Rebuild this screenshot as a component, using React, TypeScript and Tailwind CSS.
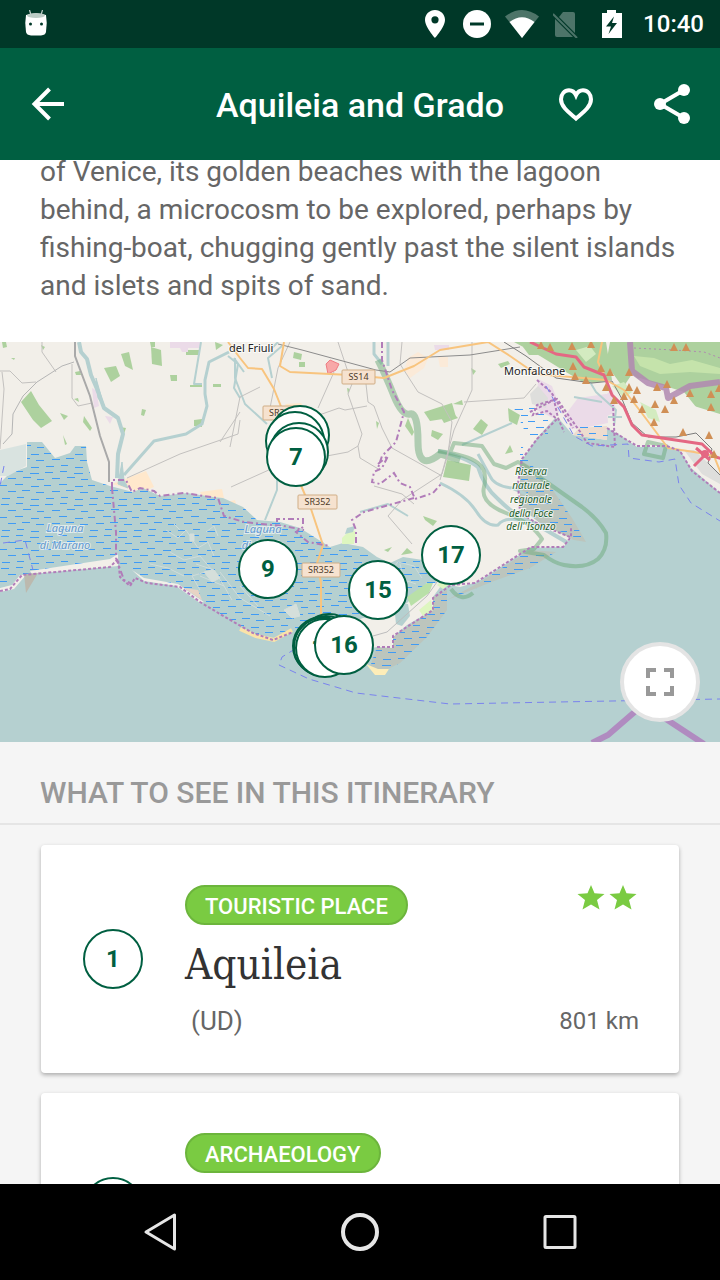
interface Place {
  id: number;
  category: string;
  name?: string;
  province?: string;
  distance?: string;
  stars?: number;
}

interface Marker {
  x: number;
  y: number;
  label?: string;
}

const places: Place[] = [
  { id: 1, category: 'TOURISTIC PLACE', name: 'Aquileia', province: '(UD)', distance: '801 km', stars: 2 },
  { id: 2, category: 'ARCHAEOLOGY' },
];

// Marker centres, in map units (720 x 400)
const markers: Marker[] = [
  { x: 300, y: 93 },
  { x: 295, y: 99 },
  { x: 299, y: 110 },
  { x: 296, y: 115, label: '7' },
  { x: 268, y: 227, label: '9' },
  { x: 378, y: 248, label: '15' },
  { x: 451, y: 213, label: '17' },
  { x: 329, y: 301 },
  { x: 326, y: 303 },
  { x: 322, y: 304 },
  { x: 323, y: 305 },
  { x: 325, y: 306, label: '14' },
  { x: 344, y: 303, label: '16' },
];

const fields = [
  'M21 60l10-11 8 14 13 16-11 7-8-8z',
  'M104 26l12-2 4 10-9 6z',
  'M121 12l8-2 4 18-8-4z',
  'M151 5l10 3 1 16-10-2z',
  'M170 33h7v6h-6z',
  'M186 8h14v5h-14z',
  'M60 71l8 3-4 4z',
  'M74 57l4-1 1 4z',
  'M84 74l8 12-2 3-7-9z',
  'M142 67l4 1-2 6-3-1z',
  'M194 78l8-1v8l-8-1z',
  'M63 93l4 9-2 1z',
  'M213 42h8v3h-8z',
  'M190 43h12v2h-12z',
  'M11 16l4 0-1 2z',
  'M41 3l4 2-2 3z',
  'M75 30l5-1 1 4-5 0z',
  'M150 0h5v5h-4z',
  'M2 0l4 0 1 5-4 1z',
  'M120 85l6 1-2 6z',
  'M215 0l8 3-7 5z',
  'M294 10l8 2-1 6-8-2z',
  'M299 20h6v5h-6z',
  'M424 70l28-9 4 14-26 4z',
  'M432 88l11 4-5 6-7-4z',
  'M447 118l24 5-2 16-26-4z',
  'M408 76l6 14-2 4-7-10z',
  'M376 79l3 2-2 6z',
  'M347 46l3 1-2 5z',
  'M473 87l8-10 7 6-6 10z',
  'M508 66l12 7-3 10-8-4z',
  'M505 112l5-9 3 7z',
  'M440 74l10-6 8 8-14 5z',
  'M453 62l9-4 1 5z',
  'M423 174l14 5-4 5-8-6z',
  'M384 208l8-3-4 5z',
  'M401 213l6-7 6 5z',
  'M523 5l12-2 3 10-9 0z',
  'M498 22l10-3 2 3-9 4z',
  'M471 26l5 3-3 4z',
];

const residential = [
  'M170 0h30v6h-30z',
  'M180 6h8v4h-6z',
  'M92 46l4 2 3 16-5 2z',
  'M105 74l8 1-3 7z',
  'M538 37l14 7 9 24-8 8-16-8z',
  'M566 72l12-16 28-4 2 29-20 4-17 2z',
  'M600 56l13-8 3 22-9 4z',
  'M434 3h15v5h-14z',
];

const minorRoads = [
  'M0 29l10 0 12 12 14-1',
  'M2 30l2 17-4 60',
  'M72 22v34l6 8 14-3',
  'M42 0l0 10 14 20',
  'M127 136l53-24 58-20 2-14',
  'M231 145l40-18M240 70l-20 30M230 105l10-50 20-10',
  'M338 0l8 24 6 18M334 30l-16 36',
  'M352 42l-4 10 14 40-4 12 2 12 20 12',
  'M366 42l2 18 6 4 8 22 10 20 50 28',
  'M402 0l-2 22 18 28 24 12 10 18-4 32-6 20-40 26-14 16 24 28',
  'M374 144l28 8 12 10',
  'M305 78l34-12 6 2 22-4',
  'M316 116l32-6 10-6',
  'M472 0v48l-18 40-14 50M464 60l60-4 12-14',
  'M290 0l-12 26-10 50',
];

const peaks: [number, number][] = [
  [541, 3], [550, 5], [572, 4], [591, 2], [573, 24], [575, 34], [586, 38], [601, 26],
  [610, 30], [629, 30], [606, 45], [629, 45], [637, 48], [624, 54], [634, 57], [614, 58],
  [642, 67], [655, 62], [665, 67], [654, 80], [683, 90], [709, 93], [674, 5], [686, 5],
  [657, 45], [667, 42], [690, 51], [674, 58], [711, 52], [711, 65], [714, 112], [719, 46],
];

const roadSigns = [
  { x: 263, y: 64, name: 'SR352', width: 38 },
  { x: 342, y: 28, name: 'SS14', width: 33 },
  { x: 298, y: 153, name: 'SR352', width: 39 },
  { x: 302, y: 221, name: 'SR352', width: 38 },
];

function MapCanvas() {
  return (
    <svg
      className="block h-full w-full font-['Noto_Sans',sans-serif]"
      viewBox="0 0 720 400"
      preserveAspectRatio="xMidYMid slice"
      fill="none"
      aria-hidden="true"
    >
      <defs>
        <pattern id="marsh" width="44" height="32" patternUnits="userSpaceOnUse">
          <path
            d="M1 2.5h8M16 1.5h7M30 3.5h9M8 8.5h8M23 7.5h8M37 9.5h7M0 15.5h7M15 14.5h8M31 16.5h8M8 21.5h8M22 20.5h8M36 22.5h8M2 28.5h8M17 27.5h7M31 29.5h8"
            stroke="#3f9bf5"
            strokeWidth="1"
          />
        </pattern>
      </defs>
      <rect width="720" height="400" fill="#f2efe9" />

      {/* Karst hills */}
      <path d="M514 0H606L612 38 600 40 586 42 566 30 540 14z" fill="#add19e" />
      <path d="M610 0H720V80L700 70 684 50 640 36 622 44 606 22z" fill="#add19e" />
      <path d="M634 14l20 2 16 6 22-4 28 8v6l-30-2-30 2-20-8z" fill="#c5e3ab" />
      <path d="M632 32l-16 24 14 20 30 16 40 8 20 4V72l-26-8-18-12-22-4z" fill="#f2efe9" />
      <path d="M612 44l12-4 8 10-8 6zM640 60l16 8 4 12-12-4zM576 8l14-4 6 8-10 8z" fill="#d3ebc0" />

      <g fill="#add19e">
        {fields.map((d) => (
          <path key={d} d={d} />
        ))}
      </g>
      <g fill="#ebdbe8">
        {residential.map((d) => (
          <path key={d} d={d} />
        ))}
      </g>
      <path d="M112 142l34-13 8 16-12 5-12-3zM200 150l22-3 2 9-22-2zM226 160l9-2 2 8-8 0zM285 62l16-1 4 6-16 2z" fill="#ffe8cc" />
      <path d="M408 16l10-6 10 6-4 10-14 10-6-8zM438 15l10 0 0 10-8 0z" fill="#fbead8" />
      <path d="M326 22l4-4 9 4-3 6-8 4z" fill="#f8a8a8" stroke="#ee7c83" />
      <path d="M530 52l8-8 10 12-2 10-14-4zM684 108l10 0 26 24v10l-18-10z" fill="#dededc" />

      {/* Sea and lagoon */}
      <path
        d="M0 141L10 131 27 125V100H42L55 116 70 111 75 104H86L87 120 92 138 110 144 133 150 143 146 160 154 187 151 213 155 223 156 243 165 257 178 280 180 300 186 330 205 343 201 363 205 377 215 390 221 403 215 423 218 437 241 460 245 477 240 507 221 530 206 563 205 573 195 540 181 520 165V138L522 118 537 96 555 76 560 78 573 93 607 98V86L620 93 637 105H667L680 108 690 125 720 151V400H0z"
        fill="#b5d0d0"
      />
      <path d="M447 248V268L427 295 400 321 380 331 370 325 377 305 393 306V295L433 268V255z" fill="#bcc5bd" />
      <path d="M520 118L534 126 550 144 572 176 586 200 574 198 540 181 520 165zM447 258L480 240 530 208 556 210 530 226 494 239z" fill="#bcc5bd" />
      <path d="M573 93l34 5V84l-28 2z" fill="#eddccf" />
      <path
        d="M0 141L10 131 27 125V100H42L55 116 70 111 75 104H86L87 120 92 138 110 144 133 150 143 146 160 154 187 151 213 155 243 165 257 178 280 180 300 186 330 205 363 205 377 215 403 215 423 218 437 241 400 262 363 278 340 300 293 290 273 298 253 291 220 272 180 245 147 241 118 220 33 231 22 233 0 249z"
        fill="url(#marsh)"
      />
      <path
        d="M447 248V268L427 295 400 321 380 331 370 325 377 305 393 306V295L433 268V255zM520 100L534 126 550 144 572 176 586 200 540 181 520 165zM447 258L480 240 530 208 556 210 530 226 494 239zM514 66h34v30h-20zM576 82h32v16h-30z"
        fill="url(#marsh)"
      />
      <path d="M0 108l26-6v22L8 134H0zM8 124l12-8 6 4-18 12z" fill="#d9e3e0" />

      {/* Mud flats inside the lagoon */}
      <g stroke="#cfdcdb" strokeWidth="1">
        <path d="M166 188l12 8 8-8 12 18 10-6 6 14M170 210l14 8 16-4 12 14-20 6 8 14M196 222l18 6 10 16M150 222l18 4 16 8M206 190l8-6 4 10M220 230l20 26 30 18M240 244l18 20M174 182l6 6M200 234l24 10 8 14" />
        <path d="M390 230l8-10 16 4 8 12M400 222l4 16 12 4" />
      </g>
      <path d="M284 268l12-6 4 12-8 2zM204 230l10-2 6 8-8 4zM190 192l4 0v7l-4 0z" fill="#d5dfdb" stroke="#d5dfdb" />

      {/* Barrier islands */}
      <path d="M30 229l80-12 8-5 0 12-86 8z" fill="#f2efe9" />
      <path d="M0 246l12-3 8-10 6 0-12 14-14 3zM132 228l12 8 34 6 26 18-4 1-24-17-32-5z" fill="#f2efe9" />
      <path d="M24 232l14-1-12 20z" fill="#bcb9ae" />
      <path d="M184 246l14 2 4 10z" fill="#e8d3c5" />
      <path
        d="M330 288L363 276 387 275 407 261 427 241H443L433 255V268L407 283 393 295V306L377 305 352 310z"
        fill="#f2efe9"
      />
      <path d="M394 262h14l2 12-8 10-6-2z" fill="#b5d0d0" />
      <path d="M407 255l20-14 6 0-4 10-18 13z" fill="#b9e0a8" />
      <path d="M419 268l12-10 2 10-10 6zM437 243l6-6 8 4-8 6z" fill="#def6c0" />
      <path d="M366 322l12 5 11 0-4 6-10 0z" fill="#fdedb8" />
      <path d="M342 196l9-9 5 3-2 12-12 0z" fill="#def6c0" />
      <path d="M345 192l2-6 8-2-2 6z" fill="#b5d0d0" />
      <path d="M240 287l16 7 18 4 18-10" stroke="#fbe3a8" strokeWidth="4" />
      <path d="M373 294l14-4 40-36 10-14" stroke="#bdbdbd" />

      {/* Rivers */}
      <g stroke="#b5d0d0" strokeLinejoin="round">
        <path d="M79 0l2 10 6 7 4 16 6 14 7 19 14 10 5 16-5 20-1 24" strokeWidth="4" />
        <path d="M96 36l8 28-6-8z" fill="#b5d0d0" />
        <path d="M229 10l-20 10-4 18 0 14 2 12-5 18-16 10-32 7-30 34" strokeWidth="3" />
        <path d="M118 142l4-22 2 18 4 8z" fill="#b5d0d0" />
        <path d="M201 0l-7 42 8 0M228 14l10 8-4 24 6 10" strokeWidth="2" />
        <path d="M235 16l0 20 10 26 22 20M272 36l-4-20 14-12M277 120v28l-12 30M268 10l10-10M244 30l-10-14" strokeWidth="2" />
        <path d="M374 0v12l8 10M388 0v24" strokeWidth="3" />
        <path d="M438 109q28 6 40 16 6 20 20 32 20 20 36 24l34 20" strokeWidth="4" />
        <path d="M440 141q26 12 36 28t22 14q6-8 22-5M478 112l12 22q4 10 22 12l14 6" strokeWidth="3" />
        <path d="M574 55l28 5M590 40l6 10 20 18-2 16M608 75h14" strokeWidth="2" />
        <path d="M462 103l50-22M360 170l28-8 20 12" strokeWidth="2" />
      </g>

      {/* Nature reserves */}
      <g stroke="#6ba97a" strokeOpacity=".5" strokeWidth="4" strokeLinejoin="round">
        <path d="M378 18q8 16 16 36t16 18 8 28 22 12l20 6" strokeWidth="7" />
        <path d="M438 109q30 4 40 12t6 24 22 26 36 26l-8 10-14 2 24 4q10 8 20 10 22 4 34-6 10-10 8-26-8-14-24-26L538 134q-8-8-20-14l-12 6-12-4-12-18-28-3-4 10" strokeWidth="4" />
        <path d="M648 100l18 4-3 12-19-4zM451 247q10 14 22 4" />
      </g>

      {/* Minor roads */}
      <g stroke="#c3c1bf" strokeWidth="1">
        {minorRoads.map((d) => (
          <path key={d} d={d} />
        ))}
      </g>
      <path d="M75 0v14l15 40 10 40 9 26v20" stroke="#a9a9a9" strokeWidth="2" />
      <path d="M74 20l-12 4-25 16-14 14-10 18-1 20-9 10" stroke="#b5b5b5" strokeWidth="1" />
      <path d="M278 2l24 6 74 20 14 2 20-14 60-3 50-8" stroke="#8c8c8c" strokeWidth="1" />
      <path d="M504 0l22 14 30 22 36 5 20-2 10 18 10 24 16 14 28 0 20-4 16 16-4 14 22 22" stroke="#7c7c7c" strokeWidth="1" />

      {/* Main roads */}
      <g stroke="#f8c47e" strokeWidth="2" strokeLinejoin="round">
        <path d="M228 0l12 16 8 10 14 1 12 20 8 20 12 60 17 40 12 36-6 18 4 20v42" />
        <path d="M284 0l-4 24 10 6 60 3 34 3 30-12 26-16 48-8 22 14 26 18 70 6 18 10 20 26 24 32 26 4 20 4 8 20 34 30" />
        <path d="M602 0l-4 20 8 18" />
      </g>
      <path
        d="M530 0l26 12 20 3 8 10 20 8 8 20 12 12 8 18 10 10 60 9 14 13 20 6M706 112l-12 12M696 106l14 12"
        stroke="#e46783"
        strokeWidth="3"
        strokeLinejoin="round"
      />
      <circle cx="705" cy="112" r="4" fill="#e46783" />

      {/* Administrative boundaries */}
      <g stroke="#b17cb9" strokeWidth="2" strokeDasharray="6 3 2 3">
        <path d="M382 0v18l10 30 12 22-8 30-14 14-4 12" />
        <path d="M378 122l10-8-6 12-8 4-2 10 8 2 14-11 6 10 10 4 5 12 18-6 8-9M414 156l-50 14-12 8 4 10 0 14" />
        <path d="M112 146l0-8 14 0 6 12 8-4 14 3 6 5 24-3 20 3 14 2 6 18 20 6 18 2 22 2 20 4" />
        <path d="M112 146l4 44 0 26 8 22 8 4" />
        <path d="M277 180v-3h26v8l-7 5 12 10 22 4" />
      </g>
      <g stroke="#b17cb9" strokeWidth="2" strokeDasharray="3 2">
        <path d="M0 249l10-2 12-14 88-8 8-8 2 18 10 9 5-8 12 5 33 4 20 15 20 12 33 19 20 7 20-8" />
        <path d="M377 305h16v-11l40-26v-12l18-13 24-2 28-18 28-18h32l8-10v-10M570 195l-30-12-20-12-2-30 4-24 15-20 20-20-10-8-14 4 4-10 20-6 14 20 10 14 6 10 28 4-2-42M607 86l30 18 30 0 13 5 12 20 28 22" />
        <path d="M537 38l14 12 22 36M530 70l24-12 4 18 6 14" />
      </g>
      <path d="M630 0l2 29 16 12 18 5 2 10 22-12 30-4" stroke="#b088b0" strokeWidth="6" strokeLinejoin="round" opacity=".85" />
      <path d="M634 6l40 2 30 2 16 6" stroke="#b088b0" strokeDasharray="2 3" />

      {/* Ferry lines */}
      <g stroke="#7a83ee" strokeWidth="1" strokeDasharray="7 5">
        <path d="M326 288l-44 27-3 8 30 14 47 14 94 11 270-5" />
        <path d="M546 44l28 50 18 10 36-2 1 14 30 4 16-3 4 26 12 18 29 18M4 124l-4 20M3 201l22-3 8 30" />
      </g>
      <path d="M592 401l16-8 52-45M640 360l64 42" stroke="#b08bc0" strokeWidth="6" />

      <g fill="#d08f55">
        {peaks.map(([x, y]) => (
          <path key={`${x}-${y}`} d={`M${x} ${y - 4}l4 8h-8z`} />
        ))}
      </g>

      {roadSigns.map((sign) => (
        <g key={`${sign.name}-${sign.y}`}>
          <rect x={sign.x} y={sign.y} width={sign.width} height="14" rx="1" fill="#f6e2cf" stroke="#d0ad85" />
          <text x={sign.x + sign.width / 2} y={sign.y + 10} fontSize="9" textAnchor="middle" fill="#4d3b2a">
            {sign.name}
          </text>
        </g>
      ))}

      {/* Place names */}
      <g fontSize="11" fill="#222" stroke="#ffffff" strokeOpacity=".7" strokeWidth="2" paintOrder="stroke">
        <text x="229" y="10">del Friuli</text>
        <text x="504" y="33">Monfalcone</text>
      </g>
      <g
        fontSize="11"
        fontStyle="italic"
        textAnchor="middle"
        fill="#6699cc"
        stroke="#ffffff"
        strokeOpacity=".6"
        strokeWidth="2"
        paintOrder="stroke"
      >
        <text x="65" y="190">Laguna</text>
        <text x="65" y="207">di Marano</text>
        <text x="263" y="191">Laguna</text>
        <text x="263" y="207">di Grado</text>
      </g>
      <g
        fontSize="10"
        fontStyle="italic"
        textAnchor="middle"
        fill="#1f5f2a"
        stroke="#ffffff"
        strokeOpacity=".7"
        strokeWidth="2"
        paintOrder="stroke"
      >
        <text x="531" y="133">Riserva</text>
        <text x="531" y="147">naturale</text>
        <text x="531" y="161">regionale</text>
        <text x="531" y="175">della Foce</text>
        <text x="531" y="188">dell''Isonzo</text>
      </g>
    </svg>
  );
}

function StatusBar() {
  return (
    <div className="flex h-12 shrink-0 items-center bg-[#003828] pl-6 pr-4 text-white">
      <svg className="h-7 w-6" viewBox="0 0 24 28" aria-hidden="true">
        <path d="M5.500 0l1.500 5M18.500 0l-1.500 5" stroke="#c2d0cb" strokeWidth="1.200" />
        <path d="M2 5q10-3 20 0 1.500 8 0 17-.5 3-5 3.500H7q-4.500-.5-5-3.500-1.500-9 0-17z" fill="#fff" />
        <ellipse cx="12" cy="5.500" rx="9" ry="2.500" fill="#bcccc6" />
        <circle cx="6.500" cy="14" r="1.500" fill="#003828" />
        <circle cx="17.500" cy="14" r="1.500" fill="#003828" />
      </svg>
      <div className="ml-auto flex items-center gap-3.5">
        <svg className="size-7" viewBox="0 0 28 28" fill="currentColor" aria-hidden="true">
          <path
            fillRule="evenodd"
            d="M14 0C8.500 0 4 4.400 4 9.800 4 17.100 14 28 14 28s10-10.900 10-18.200C24 4.400 19.500 0 14 0zm0 6.200a3.600 3.600 0 1 1 0 7.200 3.600 3.600 0 0 1 0-7.200z"
          />
        </svg>
        <svg className="size-7" viewBox="0 0 28 28" aria-hidden="true">
          <circle cx="14" cy="14" r="14" fill="#fff" />
          <path d="M7 14h14" stroke="#003828" strokeWidth="3" />
        </svg>
        <svg className="h-7 w-[34px]" viewBox="0 0 34 28" aria-hidden="true">
          <path d="M17 28L0 6.500Q17-6.500 34 6.500z" fill="#fff" fillOpacity=".3" />
          <path d="M17 28L4.500 12Q17 2.500 29.500 12z" fill="#fff" />
        </svg>
        <svg className="size-7" viewBox="0 0 28 28" aria-hidden="true">
          <path d="M10 2h10q2 0 2 2v19L6 7z" fill="#4d7469" />
          <path d="M2 9l18 18H4q-2 0-2-2z" fill="#4d7469" />
          <path d="M0 4l24 24" stroke="#4d7469" strokeWidth="2" />
        </svg>
        <svg className="h-7 w-[34px]" viewBox="0 0 34 28" aria-hidden="true">
          <path d="M12 0h9v3h6v25H7V3h5z" fill="#fff" />
          <path d="M19 6.500L11 16.500h5L13.500 24 22 13h-5z" fill="#003828" />
        </svg>
        <span className="text-2xl font-medium leading-8">10:40</span>
      </div>
    </div>
  );
}

function Toolbar() {
  return (
    <header className="grid h-28 shrink-0 grid-cols-[192px_1fr_192px] items-center bg-[#005f41] text-white">
      <button type="button" aria-label="Back" className="flex size-24 items-center justify-center">
        <svg className="size-12" viewBox="0 0 48 48" fill="none" stroke="currentColor" strokeWidth="4" aria-hidden="true">
          <path d="M40 24H11M25.500 9L10.500 24l15 15" />
        </svg>
      </button>
      <h1 className="whitespace-nowrap pt-0.5 text-center text-[34px] font-medium leading-10">Aquileia and Grado</h1>
      <div className="flex">
        <button type="button" aria-label="Add to favourites" className="flex size-24 items-center justify-center">
          <svg className="size-12" viewBox="0 0 48 48" fill="none" stroke="currentColor" strokeWidth="4" aria-hidden="true">
            <path d="M24 38.500C17 32.500 9 27 9 19.200 9 14 12.600 10.200 17 10.200c3 0 5.600 1.800 7 5 1.400-3.200 4-5 7-5 4.400 0 8 3.800 8 9C39 27 31 32.500 24 38.500z" />
          </svg>
        </button>
        <button type="button" aria-label="Share" className="flex size-24 items-center justify-center">
          <svg className="size-12" viewBox="0 0 48 48" fill="currentColor" aria-hidden="true">
            <path d="M36 10L12 24l24 14" fill="none" stroke="currentColor" strokeWidth="4" />
            <circle cx="36" cy="10" r="6" />
            <circle cx="12" cy="24" r="6" />
            <circle cx="36" cy="38" r="6" />
          </svg>
        </button>
      </div>
    </header>
  );
}

function ItineraryMap() {
  return (
    <section aria-label="Map" className="relative h-[400px] overflow-hidden">
      <MapCanvas />
      {markers.map((marker, index) => (
        <button
          key={index}
          type="button"
          aria-label={marker.label ? undefined : 'Map marker'}
          className="absolute flex size-15 -translate-x-1/2 -translate-y-1/2 items-center justify-center rounded-full border-2 border-[#005f41] bg-white text-2xl font-bold text-[#005f41]"
          style={{ left: `calc(50% + ${marker.x - 360}px)`, top: marker.y }}
        >
          {marker.label}
        </button>
      ))}
      <button
        type="button"
        aria-label="Full screen"
        className="absolute bottom-5 right-5 flex size-20 items-center justify-center rounded-full border-4 border-[#e4e4e4] bg-white text-[#999999]"
      >
        <svg className="size-7" viewBox="0 0 28 28" fill="none" stroke="currentColor" strokeWidth="4" aria-hidden="true">
          <path d="M2 10V2h8M18 2h8v8M26 18v8h-8M10 26H2v-8" />
        </svg>
      </button>
    </section>
  );
}

function PlaceCard({ place }: { place: Place }) {
  return (
    <article className="flex min-h-[228px] items-center rounded bg-white pl-[42px] pr-10 shadow-[0_2px_4px_rgba(0,0,0,0.3)]">
      <span className="flex size-15 shrink-0 items-center justify-center rounded-full border-2 border-[#005f41] text-2xl font-bold text-[#005f41]">
        {place.id}
      </span>
      <div className="ml-[42px] flex-1 self-stretch pb-9 pt-10">
        <div className="flex items-start justify-between">
          <span className="flex h-10 items-center rounded-full border-2 border-[#6cb53c] bg-[#7acb42] px-[18px] pt-1 text-[22px] font-medium leading-8 text-white">
            {place.category}
          </span>
          {place.stars && (
            <div className="mr-0.5 flex gap-1" role="img" aria-label={`${place.stars} stars`}>
              {Array.from({ length: place.stars }, (_, i) => (
                <svg key={i} className="size-7" viewBox="0 0 28 28" fill="#7acb42" aria-hidden="true">
                  <path d="M14 0l3.500 8.300 10 .7-7.500 6.100L22.500 24.500 14 19.500 5.500 24.500l2.500-9.400L.5 9l10-.7z" />
                </svg>
              ))}
            </div>
          )}
        </div>
        {place.name && (
          <h3 className="mt-3 font-['DejaVu_Serif_Condensed','DejaVu_Serif',serif] text-[42px] leading-[56px] text-[#333333]">
            {place.name}
          </h3>
        )}
        {place.province && (
          <div className="mt-3 flex items-center justify-between text-[#666666]">
            <span className="ml-1.5 text-[26px] leading-8">{place.province}</span>
            <span className="text-2xl leading-8">{place.distance}</span>
          </div>
        )}
      </div>
    </article>
  );
}

function NavigationBar() {
  return (
    <nav className="grid h-24 shrink-0 grid-cols-3 bg-black px-15 text-[#e6e6e6]">
      <button type="button" aria-label="Back" className="flex items-center justify-center">
        <svg className="size-10" viewBox="0 0 40 40" fill="none" stroke="currentColor" strokeWidth="3" strokeLinejoin="round" aria-hidden="true">
          <path d="M34.500 3v34L6 20z" />
        </svg>
      </button>
      <button type="button" aria-label="Home" className="flex items-center justify-center">
        <svg className="size-10" viewBox="0 0 40 40" fill="none" stroke="currentColor" strokeWidth="4" aria-hidden="true">
          <circle cx="20" cy="20" r="17" />
        </svg>
      </button>
      <button type="button" aria-label="Recent apps" className="flex items-center justify-center">
        <svg className="size-10" viewBox="0 0 40 40" fill="none" stroke="currentColor" strokeWidth="3" aria-hidden="true">
          <rect x="5" y="4.500" width="30" height="31" rx="1" />
        </svg>
      </button>
    </nav>
  );
}

export default function App() {
  return (
    <div className="flex h-screen flex-col bg-[#f5f5f5] font-[Roboto,sans-serif]">
      <StatusBar />
      <Toolbar />
      <main className="min-h-0 flex-1 overflow-hidden">
        <div className="-mt-[7px]">
          <p className="bg-white px-10 pb-[37px] text-[28px] leading-[38px] text-[#666666]">
            of Venice, its golden beaches with the lagoon behind, a microcosm to be explored, perhaps by
            fishing-boat, chugging gently past the silent islands and islets and spits of sand.
          </p>
          <ItineraryMap />
          <h2 className="border-b-2 border-[#e5e5e5] px-10 pb-[11px] pt-8 text-[30px] font-medium leading-[38px] text-[#999999]">
            WHAT TO SEE IN THIS ITINERARY
          </h2>
          <div className="flex flex-col gap-5 px-[41px] py-5">
            {places.map((place) => (
              <PlaceCard key={place.id} place={place} />
            ))}
          </div>
        </div>
      </main>
      <NavigationBar />
    </div>
  );
}
